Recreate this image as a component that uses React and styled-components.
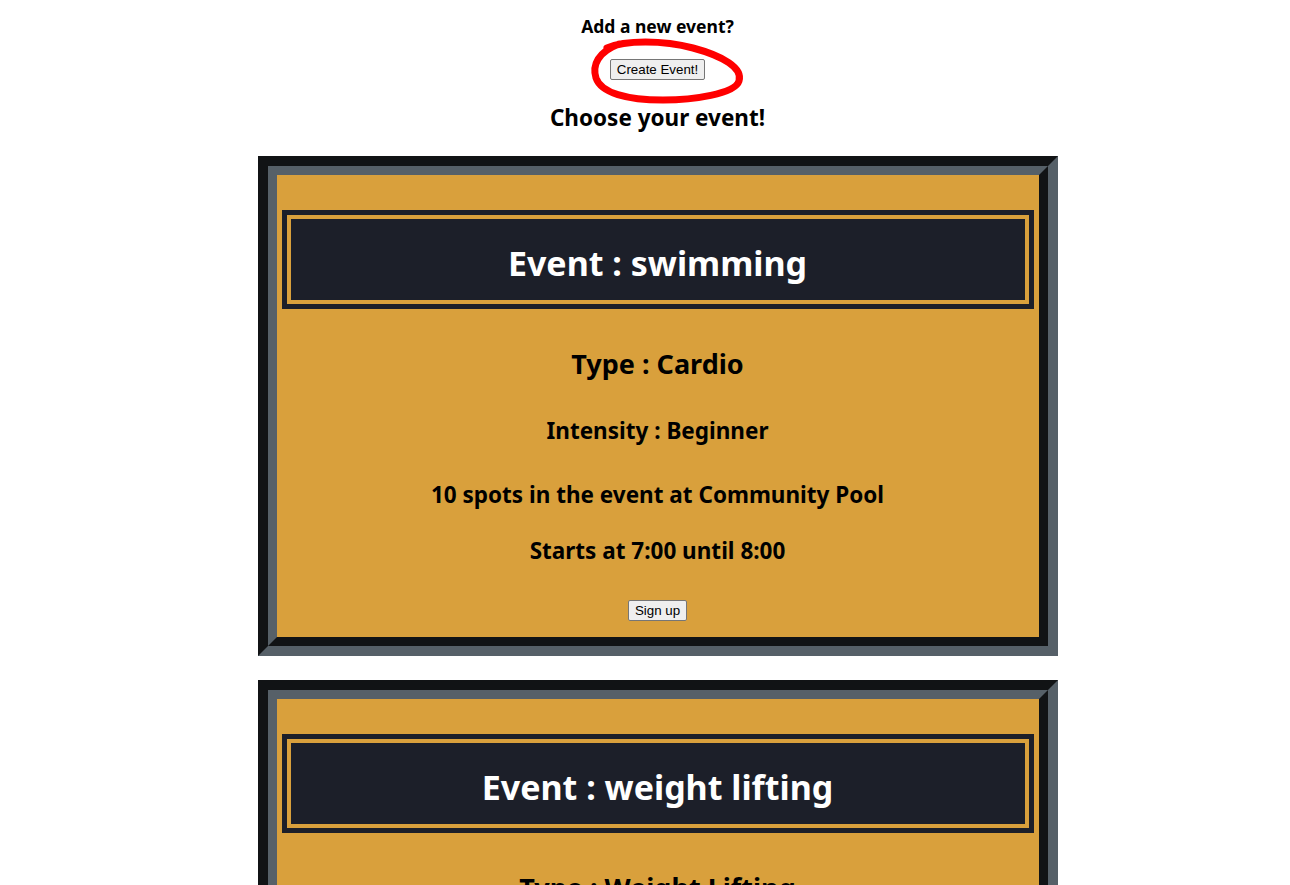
import React from 'react';
import styled, { createGlobalStyle } from 'styled-components';

const GlobalStyle = createGlobalStyle`
  html, body {
    margin: 0;
    padding: 0;
    background: #ffffff;
    overflow: hidden;
  }
  body {
    font-family: "Noto Sans", "Open Sans", sans-serif;
    color: #000000;
  }
`;

const events = [
  {
    id: 1,
    name: 'swimming',
    type: 'Cardio',
    intensity: 'Beginner',
    spots: 10,
    location: 'Community Pool',
    start: '7:00',
    end: '8:00'
  },
  {
    id: 2,
    name: 'weight lifting',
    type: 'Weight Lifting',
    intensity: 'Intermediate',
    spots: 8,
    location: 'Main Gym',
    start: '9:00',
    end: '10:00'
  }
];

const Page = styled.div`
  display: flex;
  flex-direction: column;
  align-items: center;
  padding: 14px 0 40px 25px;
`;

const Prompt = styled.div`
  font-size: 17.5px;
  line-height: 24px;
  font-weight: 700;
`;

const ButtonSpot = styled.div`
  position: relative;
  margin-top: 21px;
  display: flex;
  justify-content: center;
`;

const PlainButton = styled.button`
  font-family: "Liberation Sans", Arial, sans-serif;
  font-size: 13.333px;
  line-height: 15px;
  height: 21px;
  padding: 1px 6px;
  background: #efefef;
  color: #000000;
  border: 1px solid #767676;
  border-radius: 2px;
  cursor: pointer;
`;

// hand drawn red ring round the button
const Scribble = styled.svg`
  position: absolute;
  left: -29px;
  top: -23px;
  width: 170px;
  height: 72px;
  pointer-events: none;
  overflow: visible;
`;

const Heading = styled.div`
  margin-top: 24px;
  font-size: 22.5px;
  line-height: 28px;
  font-weight: 700;
`;

const List = styled.div`
  margin-top: 24px;
  display: flex;
  flex-direction: column;
  gap: 24px;
`;

const CardFrame = styled.div`
  width: 800px;
  box-sizing: border-box;
  border-style: solid;
  border-width: 10px;
  border-color: #111315 #566068 #566068 #111315;
`;

const CardInner = styled.div`
  border-style: solid;
  border-width: 9px;
  border-color: #566068 #111315 #111315 #566068;
  background: #d9a03c;
  padding: 35px 5px 16px;
  display: flex;
  flex-direction: column;
  align-items: center;
`;

const TitleBox = styled.div`
  align-self: stretch;
  height: 89px;
  box-sizing: content-box;
  border: 5px solid #1c1f29;
  background: #1c1f29;
  box-shadow: inset 0 0 0 4px #d9a03c;
  display: flex;
  align-items: center;
  justify-content: center;
  padding-top: 0;
`;

const Title = styled.h1`
  margin: 6px 0 0;
  color: #ffffff;
  font-size: 34px;
  line-height: 44px;
  font-weight: 700;
`;

const Line = styled.div`
  margin-top: ${(p) => p.$gap}px;
  font-size: ${(p) => p.$size}px;
  line-height: ${(p) => p.$lh}px;
  font-weight: 700;
  text-align: center;
`;

const SignUp = styled(PlainButton)`
  margin-top: 35px;
`;

function EventCard({ event }) {
  return (
    <CardFrame>
      <CardInner>
        <TitleBox>
          <Title>Event : {event.name}</Title>
        </TitleBox>
        <Line $gap={39} $size={27} $lh={32}>Type : {event.type}</Line>
        <Line $gap={37} $size={22.5} $lh={28}>Intensity : {event.intensity}</Line>
        <Line $gap={36} $size={22.5} $lh={28}>
          {event.spots} spots in the event at {event.location}
        </Line>
        <Line $gap={28} $size={22.5} $lh={28}>
          Starts at {event.start} until {event.end}
        </Line>
        <SignUp>Sign up</SignUp>
      </CardInner>
    </CardFrame>
  );
}

export default function App() {
  return (
    <>
      <GlobalStyle />
      <Page>
        <Prompt>Add a new event?</Prompt>
        <ButtonSpot>
          <PlainButton>Create Event!</PlainButton>
          <Scribble viewBox="0 0 170 72">
            <path
              d="M26 12 C44 4, 82 4, 112 12 C142 20, 162 32, 158 45 C154 58, 112 64, 82 64 C46 64, 20 57, 15 42 C11 29, 17 16, 38 8"
              fill="none"
              stroke="#ff0000"
              strokeWidth="7"
              strokeLinecap="round"
              strokeLinejoin="round"
            />
          </Scribble>
        </ButtonSpot>
        <Heading>Choose your event!</Heading>
        <List>
          {events.map((ev) => (
            <EventCard key={ev.id} event={ev} />
          ))}
        </List>
      </Page>
    </>
  );
}
